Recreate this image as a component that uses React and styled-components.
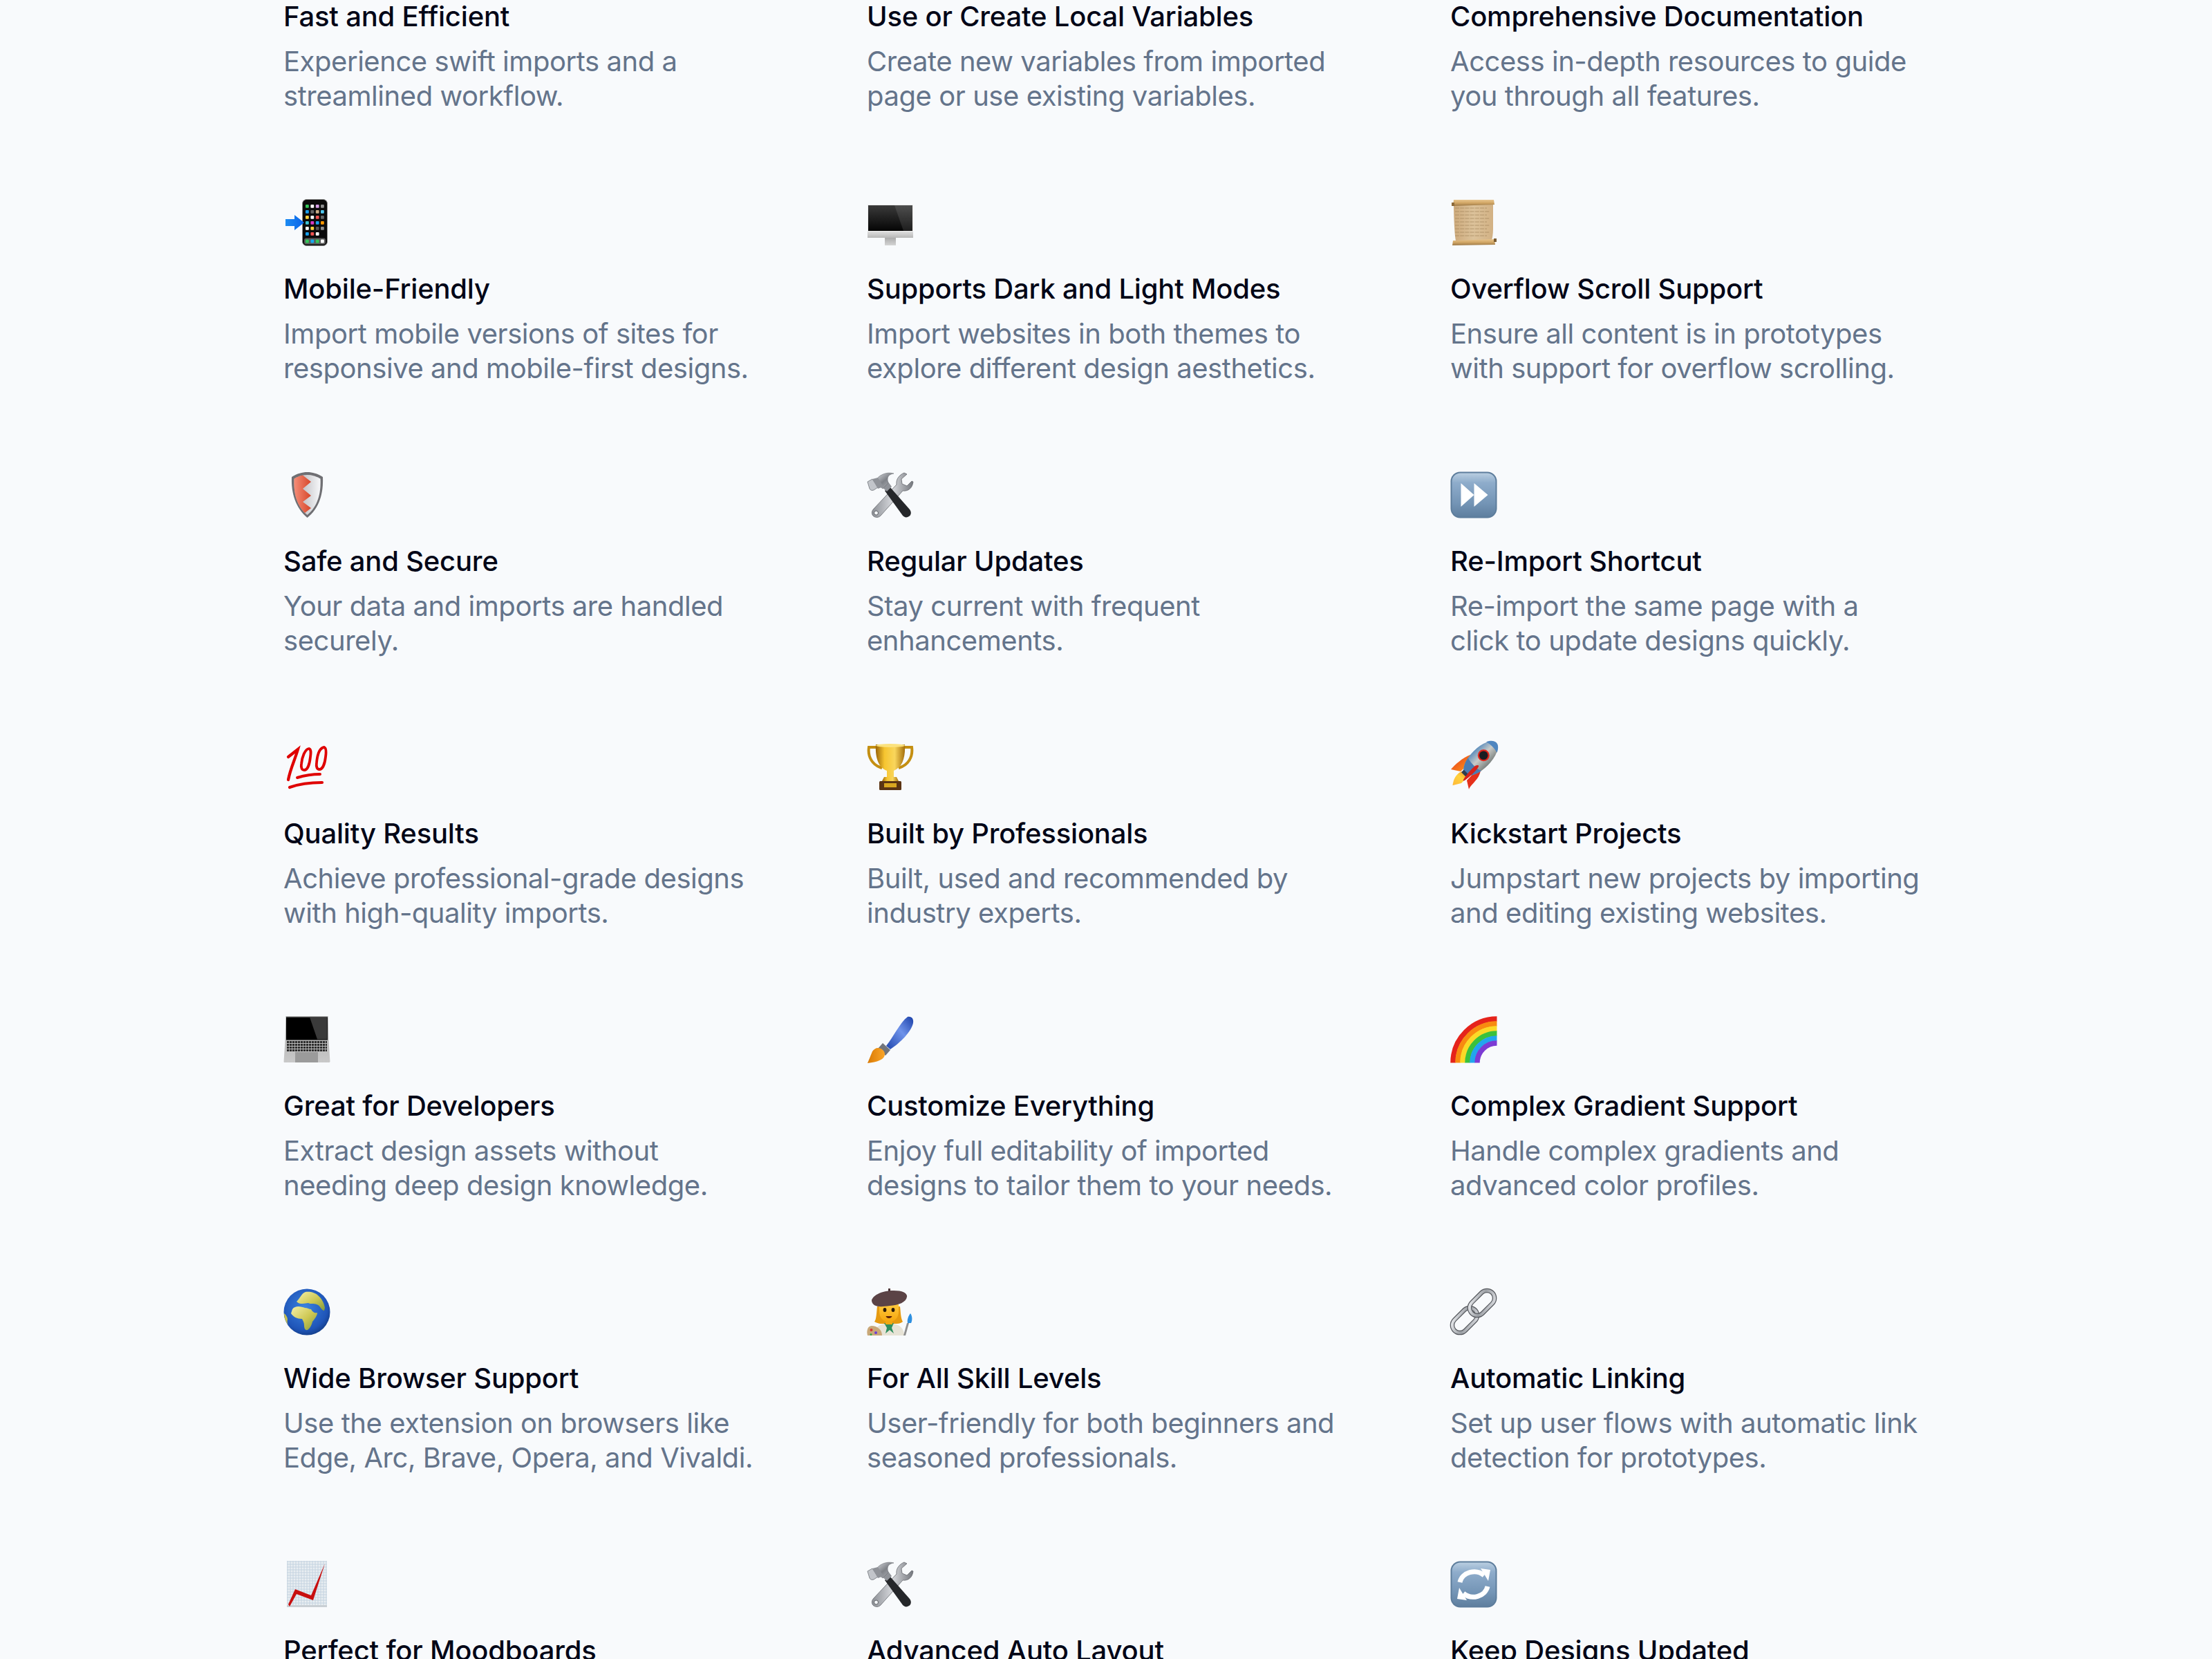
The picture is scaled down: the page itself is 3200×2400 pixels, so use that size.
import React from "react";
import styled, { createGlobalStyle } from "styled-components";

const Global = createGlobalStyle`
  html, body { margin: 0; padding: 0; background: #f8fafc; }
`;

const Page = styled.main`
  height: 2400px;
  overflow: hidden;
  background: #f8fafc;
  font-family: Inter, "Liberation Sans", sans-serif;
`;

const Grid = styled.div`
  display: grid;
  grid-template-columns: repeat(3, 682px);
  column-gap: 162px;
  row-gap: 124px;
  margin-top: -106px;
  padding-left: 410px;
`;

const Feature = styled.article`
  display: flex;
  flex-direction: column;
`;

const IconSlot = styled.div`
  width: 68px;
  height: 68px;
  margin-bottom: 37px;
  svg { display: block; overflow: visible; }
`;

const Title = styled.h3`
  margin: 0 0 15px;
  font-size: 40px;
  line-height: 50px;
  font-weight: 500;
  letter-spacing: -0.2px;
  color: #020617;
`;

const Desc = styled.p`
  margin: 0;
  font-size: 40px;
  line-height: 50px;
  font-weight: 400;
  letter-spacing: -0.45px;
  color: #64748b;
`;

const Svg = ({ children }) => (
  <svg width="68" height="68" viewBox="0 0 68 68" aria-hidden="true">{children}</svg>
);

const Phone = () => {
  const apps = [
    ["#34c759", "#fff", "#d7a0e8", "#8e8e8e"],
    ["#18a0ee", "#666", "#c9ad88", "#50c8ee"],
    ["#ffd23c", "#fff", "#ef5350", "#666"],
    ["#3fc4d4", "#d63ac2", "#1a9ff0", "#ff9800"],
    ["#fff", "#ffd23c", "#555", "#8e8e8e"],
    ["#18a0ee", "#ef5350", "#fff", null],
  ];
  const xs = [32, 39.4, 46.8, 54];
  const ys = [8, 16, 24, 32, 40, 48];
  return (
    <Svg>
      <defs>
        <linearGradient id="ph-a" x1="0" x2="1"><stop offset="0" stopColor="#1c8bf2" /><stop offset="1" stopColor="#0a63e8" /></linearGradient>
      </defs>
      <rect x="27.5" y="0.5" width="36" height="67" rx="6" fill="#0b0b0b" stroke="#8d8d8d" strokeWidth="1" />
      <path d="M3 29h13v-6l14 11-14 11v-6H3z" fill="url(#ph-a)" />
      {apps.map((row, r) => row.map((c, i) => c && <rect key={`${r}-${i}`} x={xs[i]} y={ys[r]} width="4.8" height="4.8" rx="1" fill={c} />))}
      <rect x="30" y="56.5" width="31" height="9" rx="3" fill="#5b5b5b" />
      {["#34c759", "#18a8ee", "#34c759", "#fff"].map((c, i) => <rect key={c + i} x={xs[i]} y="58.6" width="4.8" height="4.8" rx="1" fill={c} />)}
    </Svg>
  );
};

const IMac = () => (
  <Svg>
    <defs>
      <linearGradient id="im-s" x1="0" x2="0" y2="1"><stop offset="0" stopColor="#3a3a3a" /><stop offset="1" stopColor="#050505" /></linearGradient>
      <linearGradient id="im-c" x1="0" x2="0" y2="1"><stop offset="0" stopColor="#dedede" /><stop offset="1" stopColor="#b7b7b7" /></linearGradient>
      <linearGradient id="im-t" x1="0" x2="0" y2="1"><stop offset="0" stopColor="#a8a8a8" /><stop offset="1" stopColor="#d4d4d4" /></linearGradient>
    </defs>
    <rect x="26" y="55" width="16" height="12" fill="url(#im-t)" />
    <rect x="1" y="47" width="66" height="9" fill="url(#im-c)" />
    <rect x="1" y="8" width="66" height="39" fill="#ededed" />
    <rect x="2" y="9" width="64" height="37" fill="url(#im-s)" />
    <path d="M40 9h26v37H53z" fill="#fff" opacity=".1" />
  </Svg>
);

const Scroll = () => {
  const lines = [13, 18, 23, 28, 33, 38, 43, 48, 53];
  return (
    <Svg>
      <defs>
        <linearGradient id="sc-p" x1="0" x2="1"><stop offset="0" stopColor="#cdaa7c" /><stop offset=".5" stopColor="#dcc29a" /><stop offset="1" stopColor="#d2b184" /></linearGradient>
        <linearGradient id="sc-r" x1="0" x2="0" y2="1"><stop offset="0" stopColor="#e8c48c" /><stop offset=".5" stopColor="#d2a766" /><stop offset="1" stopColor="#9c7846" /></linearGradient>
      </defs>
      <path d="M5 8h57v30c0 8 0 14-2 22H8c-2-8-3-40-3-52z" fill="url(#sc-p)" />
      {lines.map((y, i) => <line key={y} x1="7" x2={i % 2 ? 57 : 53} y1={y} y2={y} stroke="#96794e" strokeWidth="1" strokeDasharray="6 1.2" opacity=".55" />)}
      <path d="M5 1h58l1 7-60 2z" fill="url(#sc-r)" />
      <rect x="2" y="5" width="4" height="5" fill="#8d6a3a" />
      <path d="M4 60l60-2 1 8-62 1z" fill="url(#sc-r)" />
      <rect x="63" y="57" width="4" height="5" fill="#7a5c32" />
    </Svg>
  );
};

const Shield = () => (
  <Svg>
    <defs>
      <linearGradient id="sh-r" x1="0" x2="1"><stop offset="0" stopColor="#f58d78" /><stop offset="1" stopColor="#d6472a" /></linearGradient>
      <linearGradient id="sh-w" x1="0" x2="1"><stop offset="0" stopColor="#a9a9ad" /><stop offset="1" stopColor="#f7f8fa" /></linearGradient>
    </defs>
    <path d="M12 8C20 3 27 1 34.500 1S49 3 57 8c1 24-5 45-22.500 59C18 53 11 32 12 8z" fill="#6f6f73" />
    <path d="M15.500 10.500C21 7 28 5 34.500 5S48 7 53.500 10.500c1 22-4 40-19 52.500C19.500 51 14.500 32 15.500 10.500z" fill="url(#sh-w)" />
    <path d="M28 5.500 40 15 28 25 40 35 28 44 40 53 31 60l3.500 3C19.500 51 14.500 32 15.500 10.500c4-2.500 8-4 12.500-5z" fill="url(#sh-r)" />
  </Svg>
);

const Tools = () => (
  <Svg>
    <defs>
      <linearGradient id="to-s" x1="0" x2="1" y2="1"><stop offset="0" stopColor="#e2e4e8" /><stop offset=".5" stopColor="#7f8288" /><stop offset="1" stopColor="#b8bbc0" /></linearGradient>
      <linearGradient id="to-w" x1="0" x2="1"><stop offset="0" stopColor="#8c8f95" /><stop offset=".5" stopColor="#d6d8dc" /><stop offset="1" stopColor="#74777d" /></linearGradient>
    </defs>
    <path d="M54 2C47 5 42 11 43 19L10 54c-4 4-3 9 0 11 3 2 7 2 10-1l32-36c8 1 14-4 15-13l-2-1-7 7-7-3-1-7 8-7z" fill="url(#to-w)" stroke="#686b70" strokeWidth=".8" />
    <circle cx="13.500" cy="60" r="3" fill="#f4f6f8" stroke="#5d6065" />
    <path d="M26 28l7-6 29 33c3 4 2 8-1 10s-6 2-9-1z" fill="#25272a" />
    <path d="M21 22l9-8 6 8-7 7z" fill="#8f9298" />
    <path d="M11 15C17 5 28 0 39 3c-7 1-11 5-8 14l-8 8z" fill="url(#to-s)" stroke="#6d7076" strokeWidth=".6" />
    <path d="M1 15 8 11l8 12-6 4c-3 1-5 0-6-2z" fill="#c2c5ca" stroke="#6f7278" strokeWidth=".8" />
    <path d="M8 11l8-2 8 13-8 3z" fill="#8f9298" />
  </Svg>
);

const Button = ({ id, children }) => (
  <Svg>
    <defs>
      <linearGradient id={id} x1="0" x2="0" y2="1"><stop offset="0" stopColor="#b8cde0" /><stop offset=".22" stopColor="#8eaccb" /><stop offset=".7" stopColor="#7394b5" /><stop offset="1" stopColor="#5f7f9f" /></linearGradient>
    </defs>
    <rect x=".5" y=".5" width="67" height="67" rx="14" fill="#5d7d9c" />
    <rect x="2.500" y="2.500" width="63" height="63" rx="12" fill={`url(#${id})`} />
    {children}
  </Svg>
);

const Forward = () => (
  <Button id="ff-b">
    <path d="M15.500 17 34.500 34 15.500 51zM34.500 17 54.500 34 34.500 51z" fill="#fff" />
  </Button>
);

const Refresh = () => (
  <Button id="rf-b">
    <path d="M14 31a21 19 0 0 1 35-10" fill="none" stroke="#fff" strokeWidth="7" />
    <path d="M44 11 58 13 55 29z" fill="#fff" />
    <path d="M54 37A21 19 0 0 1 19 47" fill="none" stroke="#fff" strokeWidth="7" />
    <path d="M24 57 10 55 13 39z" fill="#fff" />
  </Button>
);

const Hundred = () => (
  <Svg>
    <g fill="none" stroke="#df0000" strokeLinecap="round">
      <path d="M7 19 21 8C17 22 10 36 7 52" strokeWidth="4.200" />
      <path d="M37 7c-6 1-10 12-11 22-1 6 1 9 4 9 5 0 8-9 9-19 1-7 1-11-2-12z" strokeWidth="3.800" />
      <path d="M59 5c-7 1-10 12-11 22-1 7 1 10 4 10 5 0 8-9 9-18 1-7 1-13-2-14z" strokeWidth="3.800" />
      <path d="M20 49c10-3 22-5 33-5" strokeWidth="4" />
      <path d="M9 63c14-5 30-7 47-7" strokeWidth="4.200" />
    </g>
  </Svg>
);

const Trophy = () => (
  <Svg>
    <defs>
      <linearGradient id="tr-g" x1="0" x2="1"><stop offset="0" stopColor="#9a6508" /><stop offset=".3" stopColor="#f6c530" /><stop offset=".65" stopColor="#f9d65c" /><stop offset="1" stopColor="#a56e0b" /></linearGradient>
    </defs>
    <path d="M14 5H3c-2 14 5 26 19 30M52 5h13c2 14-5 26-19 30" fill="none" stroke="#c48f12" strokeWidth="4" />
    <path d="M13 1h42c1 18-3 33-16 38v9h-10v-9C16 34 12 19 13 1z" fill="url(#tr-g)" />
    <ellipse cx="34" cy="2.500" rx="21" ry="2.500" fill="#fbe27e" />
    <path d="M25 48h18l3 6H22z" fill="url(#tr-g)" />
    <rect x="18" y="54" width="32" height="13" rx="1.500" fill="#5b3413" />
    <rect x="25" y="57" width="18" height="6" fill="#d9a620" />
  </Svg>
);

const Rocket = () => (
  <Svg>
    <defs>
      <linearGradient id="ro-a" x1="0" x2="1" y2="0"><stop offset="0" stopColor="#5f8fbd" /><stop offset=".48" stopColor="#c9cbc8" /><stop offset="1" stopColor="#7c8280" /></linearGradient>
      <linearGradient id="ro-f" x1="0" x2="1" y1="0" y2="1"><stop offset="0" stopColor="#e5301b" /><stop offset="1" stopColor="#ffa11c" /></linearGradient>
      <linearGradient id="ro-x" x1="1" x2="0" y1="0" y2="1"><stop offset="0" stopColor="#f27a1a" /><stop offset=".5" stopColor="#ffd23c" /><stop offset="1" stopColor="#ffb83a" /></linearGradient>
    </defs>
    <path d="M29 16C18 20 7 30 1 37l14 3 14-13z" fill="url(#ro-f)" />
    <path d="M39 37c6 0 5 4 3 8-3 8-14 16-15 21l-3-13z" fill="#e5301b" />
    <path d="M17 40c-4 1-9 5-12 13-1 4-2 8-1 7l12-3 9-9 5-8z" fill="url(#ro-x)" />
    <g transform="rotate(45 44 21)">
      <ellipse cx="44" cy="21" rx="14.500" ry="32" fill="url(#ro-a)" />
      <path d="M33 -1.500C36 -8 40 -11 44 -11s8 3 11 9.500c-7-2-15-2-22 0z" fill="#4f86c0" />
      <path d="M30.500 33C34 36 54 36 57.500 33 56 43 50 53 44 53S32 43 30.500 33z" fill="#4a7cb3" />
      <circle cx="44" cy="15" r="8.500" fill="#e0241a" />
      <circle cx="44" cy="15" r="6.300" fill="#1b1d21" />
      <rect x="38.500" y="50" width="11" height="5" fill="#2f3d4e" />
    </g>
    <path d="M36 32c4-2 6-1 5 1-4 7-13 15-20 20-2 1-3 0-2-1 4-7 11-15 17-20z" fill="#d5231b" />
  </Svg>
);

const Laptop = () => (
  <Svg>
    <defs>
      <linearGradient id="la-b" x1="0" x2="0" y2="1"><stop offset="0" stopColor="#a8a8a8" /><stop offset="1" stopColor="#c9c9c9" /></linearGradient>
    </defs>
    <path d="M3.500 0h61l1 35 2 31-1 1H1L.5 66l2-31z" fill="url(#la-b)" />
    <rect x="4" y="1.500" width="60" height="33" fill="#000" />
    <path d="M38 1.500h25.500v32H49z" fill="#3a3a3a" />
    {[36, 40, 44, 48].map((y) => <line key={y} x1="5" x2="63" y1={y + 1.5} y2={y + 1.5} stroke="#2d2d2d" strokeWidth="3" strokeDasharray="3.200 .8" />)}
    <rect x="17" y="52" width="33" height="15" fill="#9b9b9b" />
  </Svg>
);

const Brush = () => (
  <Svg>
    <defs>
      <linearGradient id="br-h" x1="0" x2="1" y1="1" y2="0"><stop offset="0" stopColor="#1f46ad" /><stop offset=".55" stopColor="#6f93ea" /><stop offset="1" stopColor="#1a3fa8" /></linearGradient>
      <linearGradient id="br-o" x1="0" x2="1" y2="0"><stop offset="0" stopColor="#d97a05" /><stop offset="1" stopColor="#fba628" /></linearGradient>
    </defs>
    <path d="M59 1c6-1 9 3 8 9-3 13-18 28-33 38l-6-5C38 31 48 9 59 1z" fill="url(#br-h)" />
    <path d="M23 39l11 10-7 8-11-10z" fill="#71757c" />
    <path d="M16 46c5 0 10 4 10 9 0 7-8 11-25 13 3-7 5-12 7-17 2-3 5-5 8-5z" fill="url(#br-o)" />
  </Svg>
);

const Rainbow = () => {
  const bands = [["#e5231b", 63.5], ["#f88b10", 56.5], ["#fbd927", 49.5], ["#3bc13c", 42.5], ["#22a5ee", 35.5], ["#7c3bd4", 28.5]];
  return (
    <Svg>
      {bands.map(([c, r]) => (
        <path key={c} d={`M${67.5 - r} 67.5A${r} ${r} 0 0 1 67.5 ${67.5 - r}`} fill="none" stroke={c} strokeWidth="7.500" />
      ))}
    </Svg>
  );
};

const Globe = () => (
  <Svg>
    <defs>
      <radialGradient id="gl-s" cx=".45" cy=".4" r=".65"><stop offset="0" stopColor="#3b83e0" /><stop offset=".75" stopColor="#1f55b8" /><stop offset="1" stopColor="#123a80" /></radialGradient>
      <linearGradient id="gl-l" x1="0" x2="1" y2="1"><stop offset="0" stopColor="#f4f0a8" /><stop offset=".55" stopColor="#cdc752" /><stop offset="1" stopColor="#7f9a3e" /></linearGradient>
    </defs>
    <circle cx="34" cy="34" r="33.500" fill="url(#gl-s)" />
    <path d="M13 30c4-6 13-4 18-2 4 0 6 2 9 2 2 4 5 6 9 5 0 4-3 8-7 13-1 5-4 10-7 12-4 1-5-3-5-7 0-4-2-7-3-9-7 0-13-3-16-8z" fill="url(#gl-l)" />
    <path d="M19 19c4-3 7-12 13-14 7-1 14 1 18 5 5 4 9 11 10 18l-1 4c-4 0-6-8-11-9-4-2-9 0-12-2-3 0-5 1-8 1s-6 0-9-3z" fill="url(#gl-l)" />
    <path d="M1 36c3 2 5 6 5 9-1 3 0 6 1 8-4-5-6-11-6-17z" fill="#c5bf50" />
  </Svg>
);

const Artist = () => (
  <Svg>
    <defs>
      <linearGradient id="ar-f" x1="0" x2="0" y2="1"><stop offset="0" stopColor="#ffc83d" /><stop offset="1" stopColor="#f5a70e" /></linearGradient>
    </defs>
    <path d="M15 26c-1 8-1 19-4 22 5 3 9 3 12 3h18c4 0 7 0 11-3-3-5-3-14-4-22z" fill="#e69a10" />
    <path d="M9 68c0-10 8-15 16-17h14c9 2 15 7 15 17z" fill="#e7e3d6" />
    <path d="M25 50h14l-3 7 3 8-6-5-6 5 2-8z" fill="#2f8f5f" />
    <rect x="27" y="44" width="10" height="8" fill="#f0a713" />
    <path d="M18 23h28v10c0 10-6 15-14 15s-14-5-14-15z" fill="url(#ar-f)" />
    <ellipse cx="26" cy="31" rx="2.400" ry="3" fill="#2a1a08" />
    <ellipse cx="38" cy="31" rx="2.400" ry="3" fill="#2a1a08" />
    <path d="M27.500 40h9c-1 4-8 4-9 0z" fill="#5a1d05" />
    <path d="M7 17C9 9 23 3 39 3c13 0 20 4 19 9-1 8-12 12-25 13-9 1-14 2-20 0-3-1-6-4-6-8z" fill="#5b4346" />
    <rect x="31" y="0" width="3" height="4" fill="#4b3538" />
    <path d="M1 68c-2-8 1-14 6-14 7 0 15 5 15 14z" fill="#c9a878" />
    <circle cx="6.500" cy="60" r="2" fill="#d53535" /><circle cx="13" cy="64" r="2" fill="#6d3ed6" /><circle cx="6" cy="66.500" r="1.500" fill="#3aa34a" />
    <path d="M58 50l-5 18h3l5-18z" fill="#8e8e8e" />
    <path d="M63 36c3 4 3 10 1 14h-5c-1-5 1-10 4-14z" fill="#2d8fe0" />
  </Svg>
);

const LinkIcon = () => (
  <Svg>
    <defs>
      <linearGradient id="li-g" x1="0" x2="1" y2="1"><stop offset="0" stopColor="#eceef1" /><stop offset=".5" stopColor="#9a9ea3" /><stop offset="1" stopColor="#dcdee2" /></linearGradient>
    </defs>
    <g fill="none">
      {[[21, 46], [46, 21]].map(([x, y]) => (
        <g key={x} transform={`translate(${x} ${y}) rotate(-45)`}>
          <rect x="-21" y="-11" width="42" height="22" rx="11" stroke="#585b60" strokeWidth="6.500" />
          <rect x="-21" y="-11" width="42" height="22" rx="11" stroke="url(#li-g)" strokeWidth="4" />
        </g>
      ))}
    </g>
  </Svg>
);

const Chart = () => {
  const v = Array.from({ length: 15 }, (_, i) => 6 + i * 4);
  const h = Array.from({ length: 17 }, (_, i) => 1 + i * 4);
  return (
    <Svg>
      <rect x="5" y="0" width="58" height="67" fill="#e9eef2" />
      {v.map((x) => <line key={x} x1={x} x2={x} y1="0" y2="67" stroke="#c4d3e0" strokeWidth="1" />)}
      {h.map((y) => <line key={y} x1="5" x2="63" y1={y} y2={y} stroke="#c4d3e0" strokeWidth="1" />)}
      <rect x="5" y="64" width="58" height="3" fill="#c9cfd4" />
      <path d="M7 63 17 41 40 50 60 4 43 57 19 48 9 66z" fill="#c80f0f" />
    </Svg>
  );
};

const rows = [
  [null, "Fast and Efficient", "Experience swift imports and a streamlined workflow."],
  [null, "Use or Create Local Variables", "Create new variables from imported page or use existing variables."],
  [null, "Comprehensive Documentation", "Access in-depth resources to guide you through all features."],
  [Phone, "Mobile-Friendly", "Import mobile versions of sites for responsive and mobile-first designs."],
  [IMac, "Supports Dark and Light Modes", "Import websites in both themes to explore different design aesthetics."],
  [Scroll, "Overflow Scroll Support", "Ensure all content is in prototypes with support for overflow scrolling."],
  [Shield, "Safe and Secure", "Your data and imports are handled securely."],
  [Tools, "Regular Updates", "Stay current with frequent enhancements."],
  [Forward, "Re-Import Shortcut", "Re-import the same page with a click to update designs quickly."],
  [Hundred, "Quality Results", "Achieve professional-grade designs with high-quality imports."],
  [Trophy, "Built by Professionals", "Built, used and recommended by industry experts."],
  [Rocket, "Kickstart Projects", "Jumpstart new projects by importing and editing existing websites."],
  [Laptop, "Great for Developers", "Extract design assets without needing deep design knowledge."],
  [Brush, "Customize Everything", "Enjoy full editability of imported designs to tailor them to your needs."],
  [Rainbow, "Complex Gradient Support", "Handle complex gradients and advanced color profiles."],
  [Globe, "Wide Browser Support", "Use the extension on browsers like Edge, Arc, Brave, Opera, and Vivaldi."],
  [Artist, "For All Skill Levels", "User-friendly for both beginners and seasoned professionals."],
  [LinkIcon, "Automatic Linking", "Set up user flows with automatic link detection for prototypes."],
  [Chart, "Perfect for Moodboards", ""],
  [Tools, "Advanced Auto Layout", ""],
  [Refresh, "Keep Designs Updated", ""],
];

export default function App() {
  return (
    <Page>
      <Global />
      <Grid>
        {rows.map(([Icon, title, desc]) => (
          <Feature key={title}>
            <IconSlot>{Icon && <Icon />}</IconSlot>
            <Title>{title}</Title>
            <Desc>{desc}</Desc>
          </Feature>
        ))}
      </Grid>
    </Page>
  );
}
